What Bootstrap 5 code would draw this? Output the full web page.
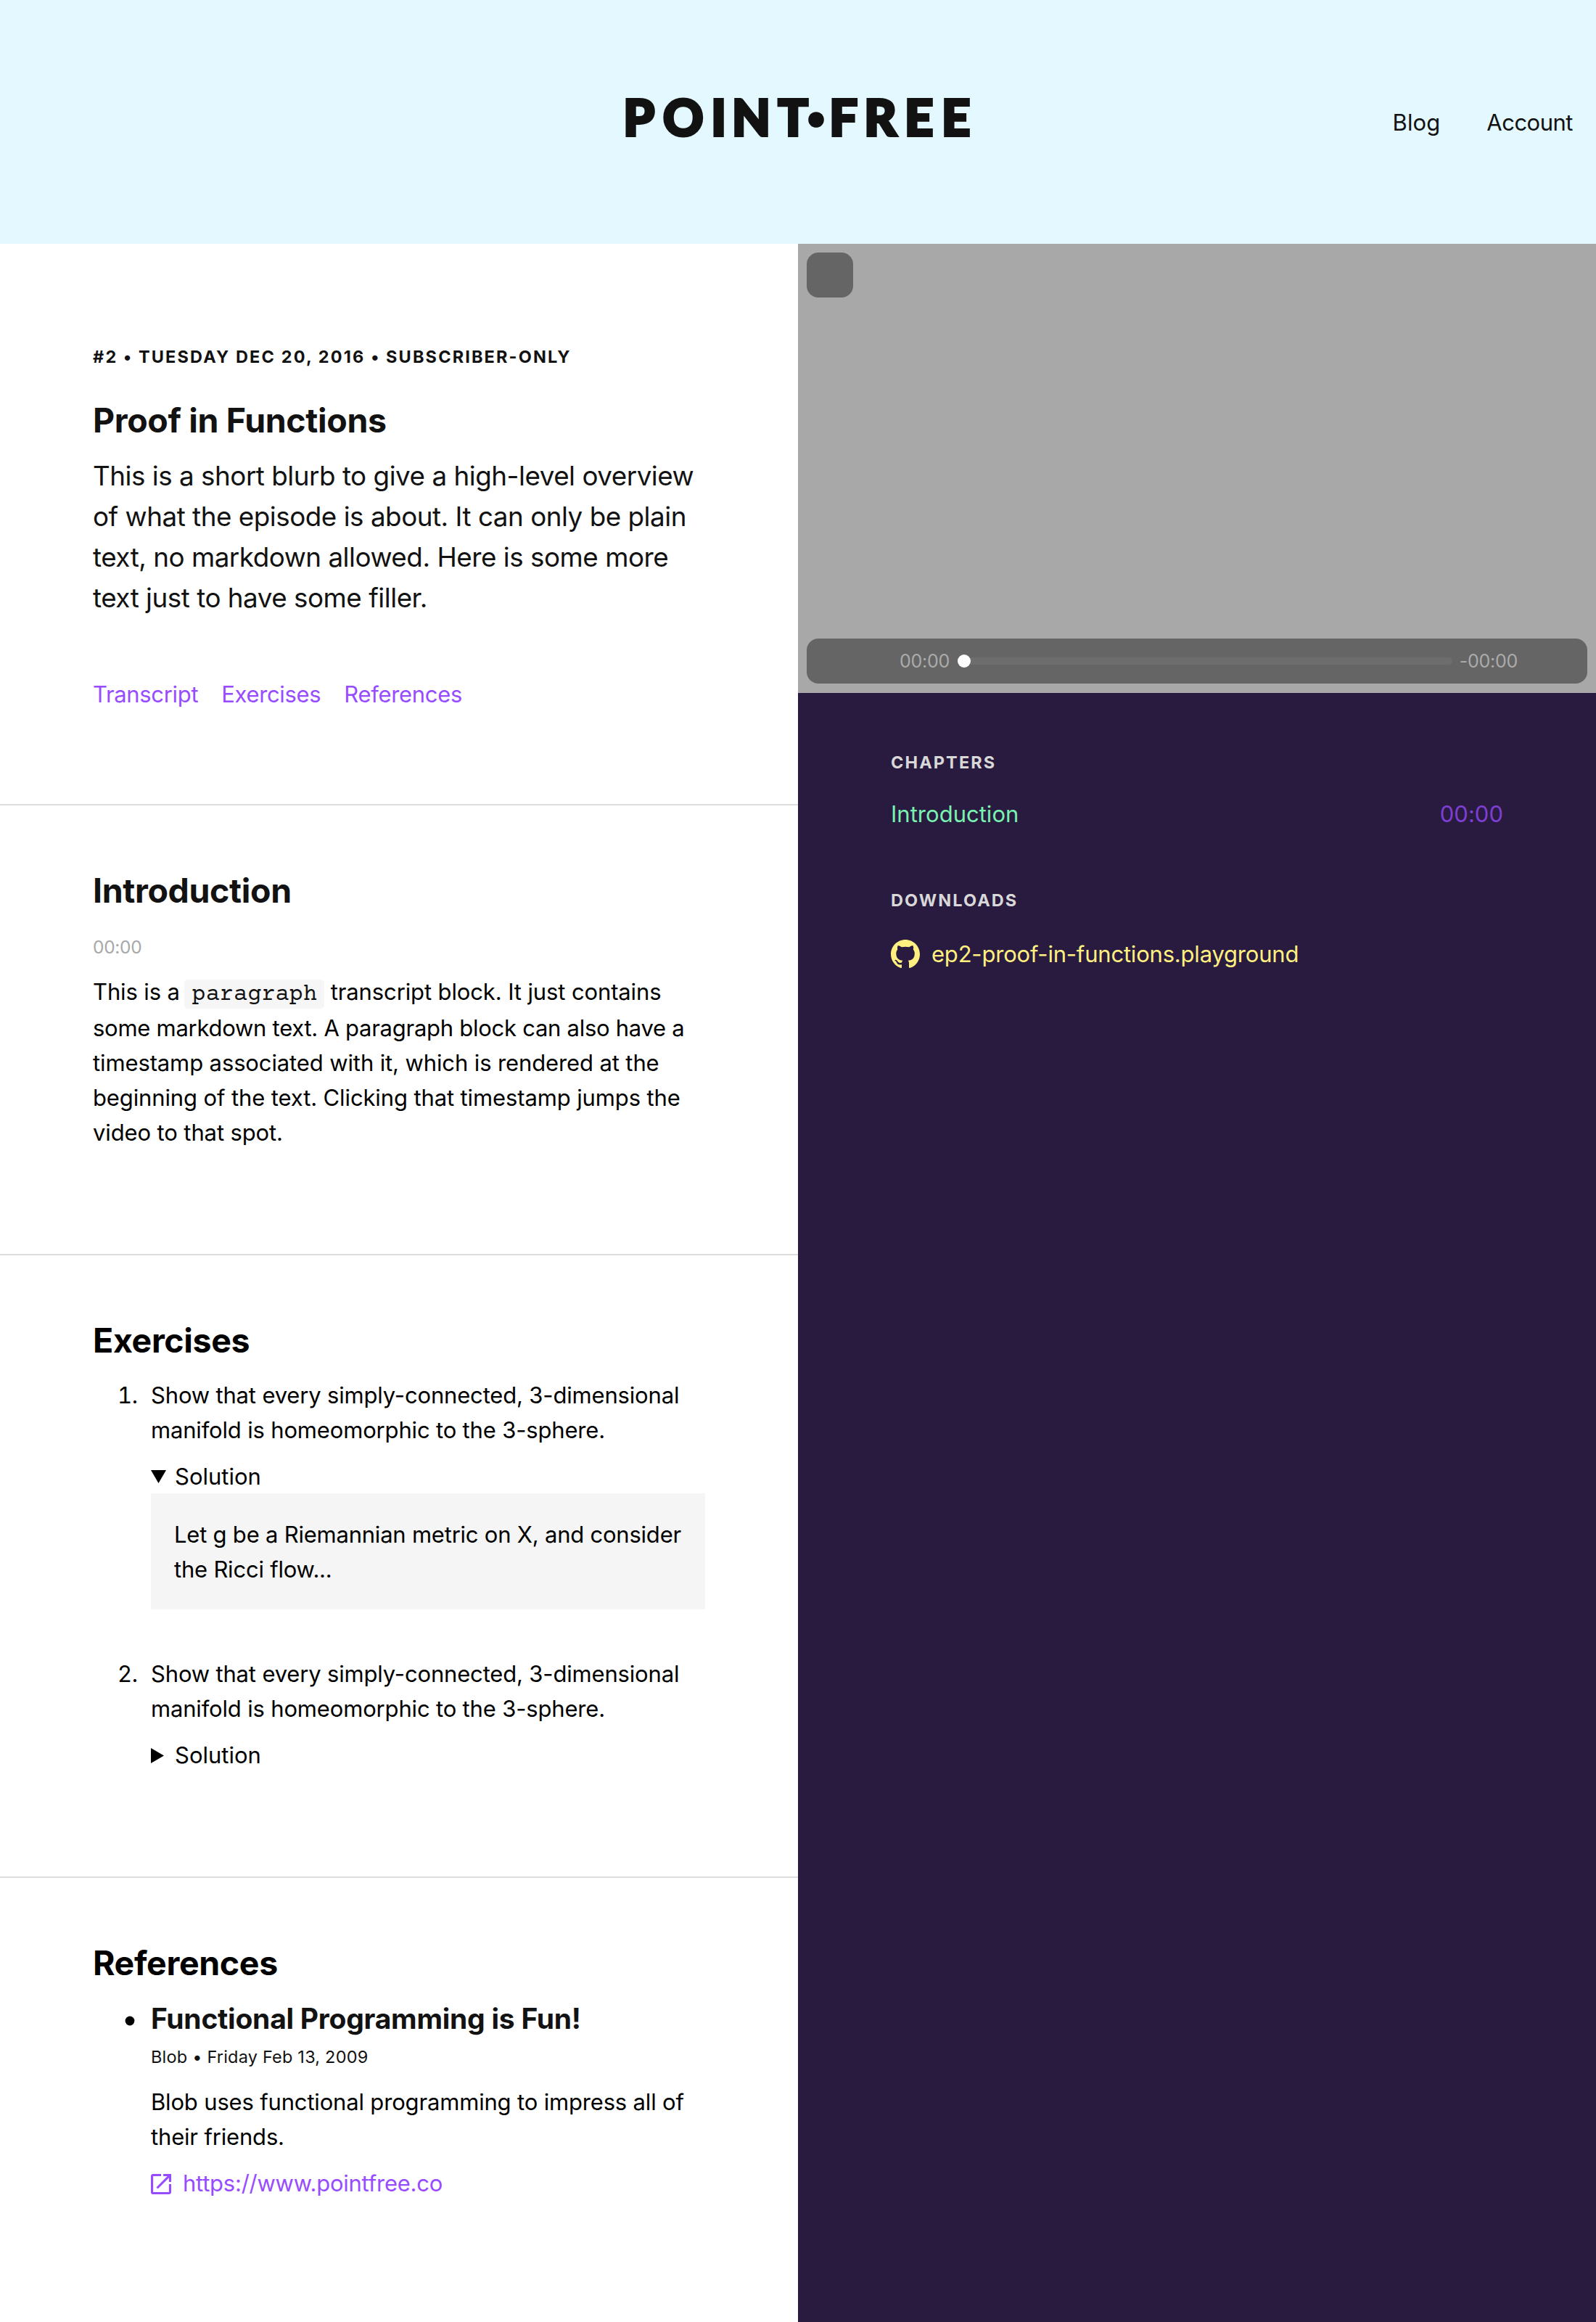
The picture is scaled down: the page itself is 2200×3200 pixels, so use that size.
<!DOCTYPE html>
<html lang="en">
<head>
<meta charset="utf-8">
<title>Proof in Functions – Point-Free</title>
<link rel="stylesheet" href="https://cdn.jsdelivr.net/npm/bootstrap@5.3.0/dist/css/bootstrap.min.css">
<style>
  body { font-family: Inter, "Liberation Sans", sans-serif; font-size: 31px; line-height: 48px; letter-spacing: -.25px; color: #000; background: #fff; }
  a { text-decoration: none; }
  .site-header { height: 336px; background: #e4f8ff; }
  .site-header a { color: #121212; letter-spacing: -.5px; }
  .site-header a.blog-link { letter-spacing: .1px; }
  .header-side { flex: 1 1 0; min-width: 0; padding: 2px 32px 0 0; }
  .site-nav { gap: 64px; }
  .page-cols { min-height: 2864px; }
  .block { padding: 87px 128px 143px; }
  .block + .block { border-top: 2px solid #ddd; }
  .block.intro { padding: 138px 128px 127px; }
  .heading { font-size: 46.5px; line-height: 60px; font-weight: 700; letter-spacing: -.36px; margin: 0; }
  .ink { color: #121212; }
  .eyebrow { font-size: 23.5px; line-height: 36px; font-weight: 700; letter-spacing: 2.1px; text-transform: uppercase; }
  .eyebrow.top { letter-spacing: 2.13px; margin-bottom: 39px; color: #121212; }
  .blurb { font-size: 36.8px; line-height: 56px; letter-spacing: -.48px; margin: 19px 0 81px; color: #121212; }
  .jump { gap: 32px; }
  .jump a, .ref-link { color: #974dff; }
  .jump a { letter-spacing: -.33px; }
  .stamp { font-size: 24.5px; line-height: 36px; letter-spacing: -.3px; color: #a8a8a8; margin: 30px 0 20px; }
  .transcript { height: 242px; margin: 0; letter-spacing: -.12px; }
  .tight { letter-spacing: -.27px; }
  .inline-code { display: inline-block; font-family: "Courier Prime", monospace; font-size: 32px; letter-spacing: 0; line-height: 37px; height: 40px; padding: 3px 10px 0; margin: 0 0 3px -2px; border-radius: 5px; background: #f6f6f6; color: #121212; }
  .marks { list-style: none; padding: 0; margin: 0; }
  .exercise-list { margin-top: 22px; }
  .reference-list { margin-top: 23px; }
  .marks > li { display: flex; }
  .marks > li + li { margin-top: 65px; }
  .bullet { flex: 0 0 80px; padding-right: 18px; text-align: right; font-variant-numeric: tabular-nums; }
  .snug { letter-spacing: -.17px; }
  .toggle-row { display: flex; align-items: center; margin-top: 16px; height: 48px; gap: 12px; letter-spacing: 0; }
  .toggle-row svg { flex: none; width: 21px; height: 21px; }
  .answer { width: 764px; margin-top: -1px; background: #f5f5f5; padding: 33px 32px 31px; white-space: nowrap; letter-spacing: -.22px; }
  .ref-title { font-size: 39px; line-height: 48px; font-weight: 700; letter-spacing: -.25px; margin: 0; }
  .ref-by { font-size: 23.5px; line-height: 36px; letter-spacing: .2px; margin: 11px 0 20px; }
  .ref-link { margin-top: 16px; gap: 16px; letter-spacing: -.25px; }
  .ref-link svg { margin-top: 2px; }
  .side { background: #291a40; }
  .video { position: relative; height: 619px; background: #a8a8a8; }
  .pip { position: absolute; left: 12px; top: 12px; width: 64px; height: 62px; border-radius: 16px; background: #656565; }
  .controls { position: absolute; left: 12px; right: 12px; bottom: 13px; height: 62px; border-radius: 16px; background: #656565; color: #ababab; font-size: 25px; padding: 0 96px 0 128px; }
  .track { position: relative; height: 10px; border-radius: 5px; background: #6d6d6d; margin: 0 10px 0 15px; }
  .knob { position: absolute; left: -4px; top: -4px; width: 18px; height: 18px; border-radius: 50%; background: #fff; }
  .side-body { padding: 78px 128px; }
  .side .eyebrow { color: #d8d8d8; letter-spacing: 2.1px; }
  .chapter { margin: 29px 0 77px; letter-spacing: .02px; }
  .chapter a { color: #79f2b0; }
  .chapter span { color: #7d3fd1; }
  .download { margin-top: 32px; gap: 16px; color: #fff080; letter-spacing: -.2px; }
</style>
<script src="https://cdn.jsdelivr.net/npm/bootstrap@5.3.0/dist/js/bootstrap.bundle.min.js"></script>
</head>
<body>
<header class="site-header d-flex align-items-center">
  <div class="header-side"></div>
  <a href="#" class="flex-shrink-0 d-block lh-1">
    <svg class="d-block" width="480" height="76" viewBox="860 130 480 76" overflow="visible" role="img" aria-label="Point-Free">
      <text y="186.6" font-family="Lato" font-weight="900" font-size="68.5" letter-spacing="0" fill="#121212" stroke="#121212" stroke-width="4" x="859.2 914 980.2 1009 1072.5">POINT</text>
      <circle cx="1125" cy="165" r="10.8" fill="#121212"/>
      <text y="186.6" font-family="Lato" font-weight="900" font-size="68.5" letter-spacing="0" fill="#121212" stroke="#121212" stroke-width="4" x="1143.2 1191.2 1247 1298">FREE</text>
    </svg>
  </a>
  <nav class="header-side site-nav d-flex justify-content-end">
    <a class="blog-link" href="#">Blog</a>
    <a href="#">Account</a>
  </nav>
</header>
<div class="row g-0 page-cols">
  <main class="col-6">
    <section class="block intro">
      <div class="eyebrow top">#2 • Tuesday Dec 20, 2016 • Subscriber-Only</div>
      <h1 class="heading ink">Proof in Functions</h1>
      <p class="blurb">This is a short blurb to give a high-level overview<br>of what the episode is about. It can only be plain<br>text, no markdown allowed. Here is some more<br>text just to have some filler.</p>
      <div class="jump d-flex"><a href="#">Transcript</a><a href="#">Exercises</a><a href="#">References</a></div>
    </section>
    <section class="block">
      <h2 class="heading ink">Introduction</h2>
      <div class="stamp">00:00</div>
      <p class="transcript">This is a <code class="inline-code">paragraph</code> transcript block. It just contains<br><span class="tight">some markdown text. A paragraph block can also have a</span><br>timestamp associated with it, which is rendered at the<br>beginning of the text. Clicking that timestamp jumps the<br>video to that spot.</p>
    </section>
    <section class="block">
      <h2 class="heading">Exercises</h2>
      <ol class="marks exercise-list snug">
        <li>
          <span class="bullet">1.</span>
          <div>
            <div>Show that every simply-connected, 3-dimensional<br>manifold is homeomorphic to the 3-sphere.</div>
            <div class="toggle-row"><svg viewBox="0 0 21 21"><path d="M0 1h21L10.500 19z"/></svg><span>Solution</span></div>
            <div class="answer">Let g be a Riemannian metric on X, and consider<br>the Ricci flow...</div>
          </div>
        </li>
        <li>
          <span class="bullet">2.</span>
          <div>
            <div>Show that every simply-connected, 3-dimensional<br>manifold is homeomorphic to the 3-sphere.</div>
            <div class="toggle-row"><svg viewBox="0 0 21 21"><path d="M0 0l18 10.500L0 21z"/></svg><span>Solution</span></div>
          </div>
        </li>
      </ol>
    </section>
    <section class="block">
      <h2 class="heading">References</h2>
      <ul class="marks reference-list">
        <li>
          <span class="bullet"><svg width="24" height="48" viewBox="0 0 24 48" class="d-inline-block align-top"><circle cx="13" cy="27" r="6.400"/></svg></span>
          <div>
            <h3 class="ref-title ink">Functional Programming is Fun!</h3>
            <div class="ref-by ink">Blob • Friday Feb 13, 2009</div>
            <div class="snug">Blob uses functional programming to impress all of<br>their friends.</div>
            <a class="ref-link d-flex align-items-center" href="#">
              <svg width="28" height="28" viewBox="3 3 18 18" fill="#974dff"><path d="M19 19H5V5h7V3H5a2 2 0 0 0-2 2v14a2 2 0 0 0 2 2h14c1.100 0 2-.9 2-2v-7h-2v7zM14 3v2h3.590l-9.830 9.830 1.410 1.410L19 6.410V10h2V3h-7z"/></svg>
              <span>https://www.pointfree.co</span>
            </a>
          </div>
        </li>
      </ul>
    </section>
  </main>
  <aside class="col-6 side">
    <div class="video">
      <div class="pip"></div>
      <div class="controls d-flex align-items-center">
        <span>00:00</span>
        <div class="track flex-fill"><div class="knob"></div></div>
        <span>-00:00</span>
      </div>
    </div>
    <div class="side-body">
      <div class="eyebrow">Chapters</div>
      <div class="chapter d-flex justify-content-between"><a href="#">Introduction</a><span>00:00</span></div>
      <div class="eyebrow">Downloads</div>
      <a href="#" class="download d-flex align-items-center">
        <svg width="40" height="40" viewBox="0 0 16 16" fill="#fff080"><path fill-rule="evenodd" d="M8 0C3.580 0 0 3.580 0 8c0 3.540 2.290 6.530 5.470 7.590.4.070.55-.17.55-.38 0-.19-.01-.82-.01-1.490-2.010.37-2.530-.49-2.690-.94-.09-.23-.48-.94-.82-1.130-.28-.15-.68-.52-.01-.53.63-.01 1.080.58 1.230.82.72 1.210 1.870.87 2.330.66.07-.52.28-.87.51-1.070-1.780-.2-3.640-.89-3.640-3.950 0-.87.31-1.590.82-2.150-.08-.2-.36-1.020.08-2.120 0 0 .67-.21 2.200.82.64-.18 1.320-.27 2-.27s1.360.09 2 .27c1.530-1.040 2.200-.82 2.200-.82.44 1.100.16 1.920.08 2.120.51.56.82 1.270.82 2.150 0 3.070-1.870 3.750-3.650 3.950.29.25.54.73.54 1.480 0 1.070-.01 1.930-.01 2.200 0 .21.15.46.55.38A8.013 8.013 0 0 0 16 8c0-4.420-3.580-8-8-8z"/></svg>
        <span>ep2-proof-in-functions.playground</span>
      </a>
    </div>
  </aside>
</div>
</body>
</html>
